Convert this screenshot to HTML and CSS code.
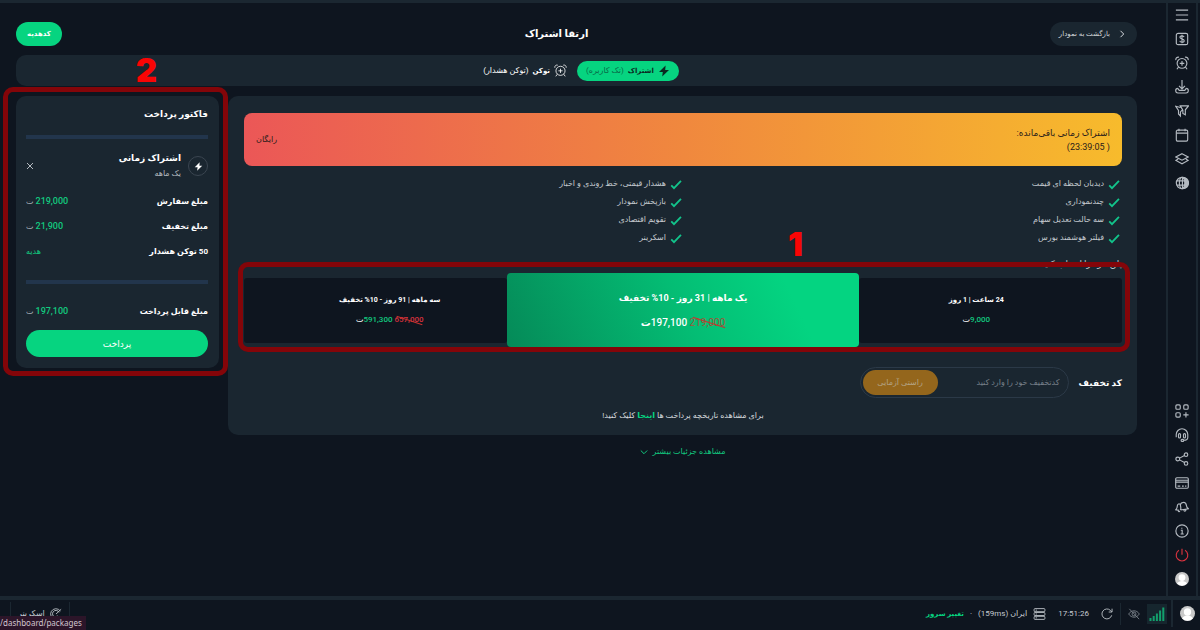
FILE: index.html
```html
<!DOCTYPE html>
<html lang="fa" dir="rtl">

<head>
  <title>ارتقا اشتراک</title>

  <meta charset="UTF-8">
  <meta name="viewport" content="width=device-width, initial-scale=1">

  <link rel="stylesheet" href="styles.css">
</head>
<body>

  <!-- shared icons -->
  <svg class="sprite" aria-hidden="true">
    <symbol id="i-check" viewBox="0 0 12 12"><path d="M.8 7l3 3L11.4 2"/></symbol>
    <symbol id="i-bolt" viewBox="0 0 12 12"><path d="M7.6.4L1 7h3.8l-.6 4.6L11 5H7.2z" fill="currentColor" stroke="none"/></symbol>
    <symbol id="i-alarm" viewBox="0 0 16 16"><circle cx="8" cy="8.4" r="5.6"/><path d="M8 5.8v5.2M5.4 8.4h5.2M1 4.6C.6 2.6 2.4.8 4.6 1.4M15 4.6c.4-2-1.4-3.8-3.6-3.2M4 12.6l-1.8 2.6M12 12.6l1.8 2.6"/></symbol>
    <symbol id="i-user" viewBox="0 0 14 14"><circle cx="7" cy="7" r="7" fill="#c9c9c9" stroke="none"/><circle cx="7" cy="5.6" r="3.4" fill="#fff" stroke="none"/><path d="M2 11.6c1.400-3.600 8.600-3.600 10 0A7 7 0 0 1 2 11.600z" fill="#fff" stroke="none"/></symbol>
  </svg>

  <div class="app">
    <main class="page">
      <header class="page-header">
        <a class="back" href="#">
          <svg viewBox="0 0 8 8" width="8" height="8"><path d="M2.500.8l3.200 3.200-3.200 3.200"/></svg>
          بازگشت به نمودار
        </a>
        <h1>ارتقا اشتراک</h1>
        <button class="gift">کدهدیه</button>
      </header>

      <nav class="tabs">
        <button class="tab active"><svg width="12" height="12"><use href="#i-bolt"/></svg><b>اشتراک</b> <span>(تک کاربره)</span></button>
        <button class="tab"><svg width="13" height="13"><use href="#i-alarm"/></svg><b>توکن</b> <span>(توکن هشدار)</span></button>
      </nav>

      <div class="columns">
        <div class="main-col">
          <section class="card">
            <div class="banner">
              <div>
                <div class="left-time">اشتراک زمانی باقی‌مانده:</div>
                <div class="left-time">( 23:39:05)</div>
              </div>
              <span>رایگان</span>
            </div>

            <div class="features">
              <ul>
                <li><svg><use href="#i-check"/></svg>دیدبان لحظه ای قیمت</li>
                <li><svg><use href="#i-check"/></svg>چندنموداری</li>
                <li><svg><use href="#i-check"/></svg>سه حالت تعدیل سهام</li>
                <li><svg><use href="#i-check"/></svg>فیلتر هوشمند بورس</li>
              </ul>
              <ul>
                <li><svg><use href="#i-check"/></svg>هشدار قیمتی، خط روندی و اخبار</li>
                <li><svg><use href="#i-check"/></svg>بازپخش نمودار</li>
                <li><svg><use href="#i-check"/></svg>تقویم اقتصادی</li>
                <li><svg><use href="#i-check"/></svg>اسکرینر</li>
              </ul>
            </div>

            <p class="choose">پلن خود را انتخاب کنید</p>
            <div class="plans">
              <button class="plan day">
                <b>24 ساعت | 1 روز</b>
                <span class="price"><em>9,000</em>ت</span>
              </button>
              <button class="plan selected">
                <b>یک ماهه | 31 روز - 10% تخفیف</b>
                <span class="price"><del>219,000</del> <em>197,100</em>ت</span>
              </button>
              <button class="plan quarter">
                <b>سه ماهه | 91 روز - 10% تخفیف</b>
                <span class="price"><del>657,000</del> <em>591,300</em>ت</span>
              </button>
              <div class="mark mark-plans"><span>1</span></div>
            </div>

            <form class="coupon">
              <label for="coupon">کد تخفیف</label>
              <div class="coupon-box">
                <input id="coupon" type="text" placeholder="کدتخفیف خود را وارد کنید">
                <button type="button">راستی آزمایی</button>
              </div>
            </form>

            <p class="history">برای مشاهده تاریخچه پرداخت ها <a href="#">اینجا</a> کلیک کنید!</p>
          </section>

          <a class="more" href="#">
            مشاهده جزئیات بیشتر
            <svg viewBox="0 0 8 8" width="8" height="8"><path d="M.8 2.500L4 5.700l3.200-3.200"/></svg>
          </a>
        </div>

        <aside class="invoice">
          <h2>فاکتور پرداخت</h2>
          <hr>
          <div class="item">
            <span class="item-icon"><svg width="9" height="9"><use href="#i-bolt"/></svg></span>
            <div class="item-name">
              <b>اشتراک زمانی</b>
              <small>یک ماهه</small>
            </div>
            <button class="remove" aria-label="حذف"><svg viewBox="0 0 8 8" width="8" height="8"><path d="M1 1l6 6m0-6l-6 6"/></svg></button>
          </div>
          <dl>
            <div><dt>مبلغ سفارش</dt><dd><em>219,000</em> ت</dd></div>
            <div><dt>مبلغ تخفیف</dt><dd><em>21,900</em> ت</dd></div>
            <div><dt>50 توکن هشدار</dt><dd class="free">هدیه</dd></div>
          </dl>
          <hr>
          <dl class="total">
            <div><dt>مبلغ قابل پرداخت</dt><dd><em>197,100</em> ت</dd></div>
          </dl>
          <button class="pay">پرداخت</button>
          <div class="mark mark-invoice"><span>2</span></div>
        </aside>
      </div>
    </main>

    <nav class="sidebar">
      <div class="icons">
        <svg viewBox="0 0 16 16"><path d="M1 2.500h14M1 8h14M1 13.500h14"/></svg>
        <svg viewBox="0 0 16 16"><rect x="1.500" y="1.500" width="13" height="13" rx="2"/><path d="M10.400 5.800c-.4-1-1.300-1.400-2.400-1.400-1.400 0-2.400.6-2.400 1.700C5.600 8.700 10.500 7.300 10.500 9.900c0 1.200-1.100 1.800-2.500 1.800-1.300 0-2.300-.6-2.600-1.600M8 3.200v9.600"/></svg>
        <svg><use href="#i-alarm"/></svg>
        <svg viewBox="0 0 16 16"><path d="M8 0v10M4.600 6.800L8 10.200l3.400-3.400M3.200 9.600C1.800 9.600.8 10.500.8 12c0 2 1 2.800 2.600 2.800h9.200c1.600 0 2.600-.8 2.600-2.800 0-1.500-1-2.400-2.400-2.400M3.200 9.600l1.600 2.200h6.400l1.600-2.200"/></svg>
        <svg viewBox="0 0 16 16"><path d="M6 2.200h9.400L11.800 6.600v5.800L9 10.800V7zM6.200 4L.8 2.600 4 7.400v4l2.200 2.300V9l2-2M6 2.200l3 4.800"/></svg>
        <svg viewBox="0 0 16 16"><rect x="1.500" y="2.500" width="13" height="12.500" rx="1.500"/><path d="M1.500 5.800h13M4.500.8v3M11.500.8v3"/></svg>
        <svg viewBox="0 0 16 16"><path d="M8 2l7 3.700-7 3.700-7-3.700zM3.600 8L1 9.600l7 3.900 7-3.900L12.400 8"/></svg>
        <svg viewBox="0 0 16 16"><circle cx="8" cy="8" r="6.500"/><path d="M9 1.500a6.500 6.500 0 0 1 0 13c3-3 3-10 0-13z" fill="currentColor"/><path d="M6.500 2C4.500 5 4.500 11 6.500 14M2 5.600h9M2 10.400h9M8.500 1.500v13"/></svg>
      </div>
      <div class="icons">
        <svg viewBox="0 0 16 16"><rect x="1" y="1" width="5" height="5" rx="1.200"/><rect x="10" y="1" width="5" height="5" rx="1.200"/><rect x="1" y="10" width="5" height="5" rx="1.200"/><path d="M12.500 9.500v6M9.500 12.500h6"/></svg>
        <svg viewBox="0 0 16 16"><path d="M1.400 10.500V7.500a6.600 6.600 0 0 1 13.200 0v3.300c0 2-2 3.200-4.600 3.200"/><rect x="4" y="6.400" width="2.300" height="5" rx="1.100"/><rect x="9.700" y="6.400" width="2.300" height="5" rx="1.100"/><rect x="7" y="13" width="3" height="2.300" rx="1.100"/></svg>
        <svg viewBox="0 0 16 16"><circle cx="3.200" cy="8" r="2.200"/><circle cx="12.600" cy="3" r="2"/><circle cx="12.600" cy="13" r="2"/><path d="M5.200 7l5.600-3.100M5.200 9l5.600 3.100"/></svg>
        <svg viewBox="0 0 16 16"><rect x=".8" y="2" width="14.400" height="12" rx="1.300"/><path d="M.8 4.800h14.400M.8 7h14.400M3 11.500h3M8 11.500h2M11.500 11.500h1.500"/></svg>
        <svg viewBox="0 0 16 16"><path d="M5.600 5C4.500 3.600 2.600 5 2.600 7c0 1.800-.4 2.800-1.800 4.200l4 .6M3.600 12.400c.4 1 1.400 1.200 2 .4M6.200 11.400c1-1.800.2-3.600 0-5.200C6 4 7.400 3 9.200 2.800c2.400-.2 3.600 1.400 3.800 3.400.2 1.800.8 2.800 2.400 3.800l-9.200 1.400M10 11.600c.4 1.600 2.400 1.400 2.600-.6"/></svg>
        <svg viewBox="0 0 16 16"><circle cx="8" cy="8" r="7"/><path d="M6.600 7.200H8.200v4M6.400 11.400h3.600M7.800 4.300v1.200"/></svg>
        <svg class="power" viewBox="0 0 16 16"><path d="M8 .8v7M4.500 2.600a6.600 6.600 0 1 0 7 0"/></svg>
        <svg viewBox="0 0 14 14"><use href="#i-user"/></svg>
      </div>
    </nav>
  </div>

  <footer class="statusbar">
    <div class="corner"><svg width="15" height="15"><use href="#i-user"/></svg></div>
    <div class="signal">
      <svg viewBox="0 0 16 14" width="16" height="14"><path d="M1.500 11v3M4.700 9v5M7.900 6.500V14M11.100 3.500V14M14.300.5V14"/></svg>
    </div>
    <svg class="gray" viewBox="0 0 14 14" width="12" height="12"><path d="M.8 7c3-5 9.400-5 12.400 0-3 5-9.400 5-12.400 0zM1.500 1l11.500 12"/><circle cx="7" cy="7" r="2.300"/></svg>
    <i class="sep"></i>
    <svg class="refresh" viewBox="0 0 14 14" width="12" height="12"><path d="M12.500 8.500A5.800 5.800 0 1 1 11 2.800l1.600 1.600M12.900.8v3.900H9"/></svg>
    <time>17:51:26</time>
    <div class="server">
      <svg viewBox="0 0 14 14" width="13" height="12"><rect x=".7" y=".7" width="12.600" height="3.600" rx="1"/><rect x=".7" y="5.200" width="12.600" height="3.600" rx="1"/><rect x=".7" y="9.700" width="12.600" height="3.600" rx="1"/><path d="M2.500 2.500h1.500M2.500 7h1.500M2.500 11.500h1.500"/></svg>
      <span>ایران (<bdi>159ms</bdi>)</span>
      <span>·</span>
      <a href="#">تغییر سرور</a>
    </div>
    <a class="screener" href="#">
      <svg viewBox="0 0 14 14" width="12" height="12"><path d="M12 3.500A6.200 6.200 0 1 0 6 13.200M10.500 5A4 4 0 1 0 6 10.700M13 1.500L7 7M8.500 8.800l4.500 4.500M8.500 12h3"/></svg>
      اسکرینر
    </a>
  </footer>

  <div class="link-hint" dir="ltr">/dashboard/packages</div>

</body>
</html>
```
FILE: styles.css
```css
* {
  box-sizing: border-box;
}

body {
  margin: 0;
  min-height: 100vh;
  display: flex;
  flex-direction: column;
  background: #0e151f;
  border-top: 3px solid #1b2731;
  color: #fff;
  font-family: Roboto, "DejaVu Sans", sans-serif;
  font-size: 8px;
  line-height: 18px;
}

h1, h2, p, ul, dl, dd {
  margin: 0;
  padding: 0;
}

em {
  font-style: normal;
}

a {
  color: inherit;
  text-decoration: none;
}

button {
  font: inherit;
  color: inherit;
  border: none;
  padding: 0;
  background: none;
  cursor: pointer;
}

svg {
  fill: none;
  stroke: currentColor;
  flex: none;
}

.sprite {
  position: absolute;
  width: 0;
  height: 0;
}

.app {
  flex: 1;
  display: flex;
  flex-direction: row-reverse;
}

/* page */

.page {
  flex: 1;
  padding: 19px 29px 0 16px;
}

.page-header {
  display: grid;
  grid-template-columns: 1fr auto 1fr;
  align-items: center;
}

h1 {
  font-size: 10px;
  padding-right: 40px;
}

.back, .gift {
  height: 24px;
  border-radius: 12px;
  display: flex;
  align-items: center;
  font-size: 7px;
}

.back {
  justify-self: start;
  gap: 8px;
  padding: 0 11px 0 9px;
  background: #1a2630;
  color: #d5d9dd;
}

.gift {
  justify-self: end;
  padding: 0 11px;
  background: #06d480;
  font-weight: bold;
}

.tabs {
  display: flex;
  justify-content: center;
  align-items: center;
  gap: 10px;
  height: 31px;
  margin: 9px 0 10px;
  padding-left: 9px;
  border-radius: 10px;
  background: #1a2630;
}

.tab {
  display: flex;
  align-items: center;
  gap: 4px;
  height: 20px;
}

.tab b {
  font-size: 7px;
}

.tab.active {
  padding: 0 9px;
  border-radius: 10px;
  background: #06d480;
  color: #0b2a22;
}

.tab.active span {
  color: #0a6b49;
}

.columns {
  display: flex;
  align-items: flex-start;
  gap: 9px;
}

.main-col {
  flex: 1;
}

.card {
  padding: 17px 15px 10px 16px;
  border-radius: 10px;
  background: #1a2630;
}

.banner {
  display: flex;
  justify-content: space-between;
  align-items: center;
  height: 53px;
  padding: 0 12px;
  border-radius: 8px;
  background: linear-gradient(to left, #f7bb2c, #f0883e 50%, #eb5757);
  color: #2a1c1a;
  line-height: 14px;
}

.left-time {
  font-size: 9px;
}

.features {
  display: grid;
  grid-template-columns: 1fr 1fr;
  margin-top: 9px;
  padding-right: 2px;
  color: #c5cacf;
}

.features ul {
  list-style: none;
}

.features li {
  display: flex;
  align-items: center;
  gap: 4px;
}

.features svg {
  width: 12px;
  height: 11px;
  color: #12c48b;
  stroke-width: 2;
}

.choose {
  margin-top: 8px;
  color: #c5cacf;
  font-size: 9px;
}

.plans {
  position: relative;
  display: grid;
  grid-template-columns: 3fr 4fr 3fr;
  align-items: center;
}

.plan {
  display: flex;
  flex-direction: column;
  align-items: center;
  justify-content: center;
  gap: 2px;
  height: 65px;
  border-radius: 3px;
  background: #0e151f;
}

.plan b {
  font-size: 7px;
}

/* the side plans lean towards the selected one */
.plan.day {
  padding-right: 28px;
}

.plan.quarter {
  padding-left: 28px;
}

.plan.selected {
  gap: 7px;
  height: 74px;
  border-radius: 4px;
  background: linear-gradient(65deg, #058a58, #04bd74 50%, #04d481 80%);
  font-size: 10px;
}

.plan.selected b {
  font-size: 9px;
}

.price em {
  color: #12c97f;
  font-weight: 500;
}

.selected .price em {
  color: #fff;
}

.selected .price {
  font-weight: bold;
}

.price del {
  position: relative;
  color: #d8323e;
  font-weight: 500;
  text-decoration: none;
}

.selected del {
  color: #9a5a3a;
  font-weight: normal;
}

.price del::after {
  content: "";
  position: absolute;
  left: 2px;
  right: 0;
  top: 50%;
  border-top: 1px solid #c8322f;
  transform: rotate(18deg);
}

.coupon {
  display: flex;
  align-items: center;
  gap: 10px;
  margin-top: 20px;
}

.coupon label {
  font-size: 9px;
  font-weight: bold;
}

.coupon-box {
  display: flex;
  justify-content: space-between;
  width: 209px;
  height: 31px;
  padding: 2px;
  border: 1px solid #2b3947;
  border-radius: 16px;
}

.coupon input {
  flex: 1;
  min-width: 0;
  padding: 0 6px;
  border: none;
  outline: none;
  background: none;
  color: #fff;
  font: inherit;
}

.coupon input::placeholder {
  color: #77808a;
}

.coupon button {
  width: 75px;
  border-radius: 13px;
  background: #94661c;
  color: #b3a384;
}

.history {
  margin-top: 9px;
  text-align: center;
  color: #d5d9dd;
}

.history a {
  color: #06d480;
  font-weight: bold;
}

.more {
  display: flex;
  justify-content: center;
  align-items: center;
  gap: 5px;
  margin-top: 8px;
  color: #12c97f;
}

/* invoice */

.invoice {
  position: relative;
  width: 203px;
  padding: 9px 11px 11px 10px;
  border-radius: 10px;
  background: #1a2630;
}

.invoice h2 {
  font-size: 9px;
}

.invoice hr {
  height: 4px;
  margin: 12px 0 0;
  border: none;
  background: #22354c;
}

.item {
  display: flex;
  align-items: center;
  gap: 7px;
  margin-top: 12px;
  line-height: 15px;
}

.item-icon {
  display: flex;
  align-items: center;
  justify-content: center;
  width: 20px;
  height: 20px;
  border: 1px solid #3a4550;
  border-radius: 50%;
}

.item-name {
  flex: 1;
}

.item b {
  display: block;
  font-size: 9px;
}

.item small {
  display: block;
  font-size: 8px;
  color: #b3b9bf;
}

.remove {
  display: flex;
  color: #b3b9bf;
}

.invoice dl {
  margin-top: 8px;
  margin-bottom: 16px;
}

.invoice dl div {
  display: flex;
  justify-content: space-between;
  line-height: 25px;
}

.invoice dt {
  font-size: 8px;
  font-weight: bold;
}

.invoice dd {
  color: #a9b0b7;
}

.invoice dd em {
  color: #12c97f;
  font-size: 9px;
  font-weight: 500;
}

.invoice .free {
  color: #12c97f;
}

.invoice .total {
  margin-top: 15px;
  margin-bottom: 6px;
}

.pay {
  display: block;
  width: 100%;
  height: 27px;
  border-radius: 14px;
  background: #06d480;
  font-size: 9px;
}

/* red numbered frames */

.mark {
  position: absolute;
  border: 5px solid #840509;
  border-radius: 10px;
  pointer-events: none;
}

.mark span {
  position: absolute;
  color: #f90505;
  font-family: Inter, sans-serif;
  font-size: 33px;
  font-weight: 900;
  line-height: 33px;
}

.mark-plans {
  inset: -11px -8px -5px -6px;
}

.mark-plans span {
  right: 322px;
  bottom: 86px;
}

.mark-invoice {
  inset: -9px -9px -8px -13px;
}

.mark-invoice span {
  right: 66px;
  bottom: 284px;
}

/* right rail */

.sidebar {
  display: flex;
  flex-direction: column;
  justify-content: space-between;
  width: 32px;
  margin-right: 2px;
  padding: 5px 7px 10px;
  border: solid #1b2731;
  border-width: 0 2px;
  color: #b4bac1;
}

.icons {
  display: flex;
  flex-direction: column;
  align-items: center;
  gap: 10px;
}

.icons svg {
  width: 14px;
  height: 14px;
  stroke-width: 1.3;
}

.icons .power {
  color: #d9333f;
}

/* bottom bar */

.statusbar {
  display: flex;
  align-items: center;
  height: 34px;
  padding-bottom: 3px;
  border-top: 4px solid #1b2731;
  color: #c5cacf;
}

.corner {
  display: flex;
  align-items: center;
  align-self: stretch;
  width: 29px;
  padding-right: 5px;
  border-left: 2px solid #1b2731;
}

.signal {
  display: flex;
  align-items: center;
  justify-content: center;
  width: 20px;
  height: 20px;
  margin: 0 4px 0 7px;
  background: #16262e;
  color: #12a06c;
}

.signal svg {
  stroke-width: 2;
}

.gray {
  color: #7d858d;
}

.sep {
  width: 1px;
  height: 22px;
  margin: 0 7px;
  background: #1b2731;
}

time {
  margin: 0 12px;
}

.server {
  display: flex;
  align-items: center;
  gap: 6px;
}

.server a {
  color: #06d480;
  font-size: 7px;
  font-weight: bold;
}

.screener {
  display: flex;
  align-items: center;
  gap: 5px;
  height: 24px;
  margin-right: auto;
  margin-left: 10px;
  padding: 0 7px;
  border: solid #1b2731;
  border-width: 0 1px;
}

.link-hint {
  position: fixed;
  left: 0;
  bottom: 0;
  padding: 0 4px 0 0;
  background: #2c1529;
  color: #d2c6d0;
  font-family: "Noto Sans", sans-serif;
  font-size: 8px;
  line-height: 14px;
}
```
